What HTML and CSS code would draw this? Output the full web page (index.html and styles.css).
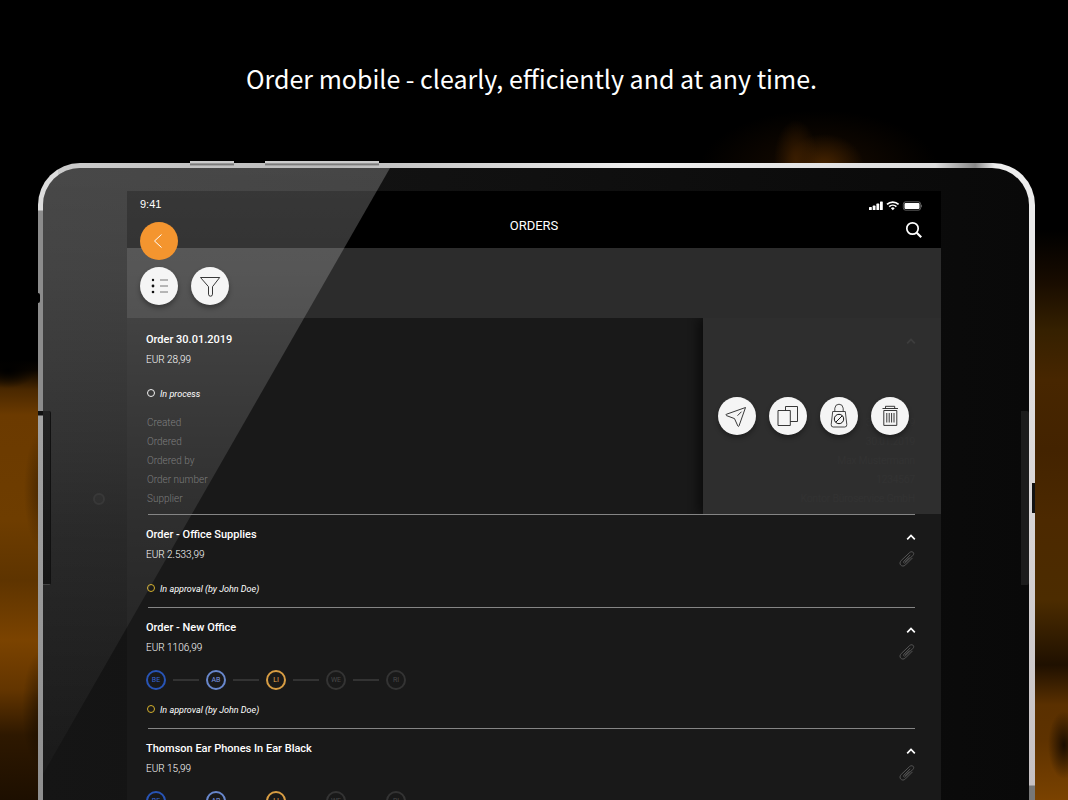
FILE: index.html
```html
<!DOCTYPE html>
<html lang="en">
<head>
<meta charset="utf-8">
<meta name="viewport" content="width=device-width, initial-scale=1">
<title>Orders</title>
<link rel="stylesheet" href="styles.css">
</head>
<body>
<svg class="defs" aria-hidden="true">
  <symbol id="chevron" viewBox="0 0 10 8"><path d="M1.2 6.3 5 2.4 8.800 6.300" fill="none" stroke="currentColor" stroke-width="1.700"/></symbol>
  <symbol id="clip" viewBox="0 0 18 18"><path d="M12.300 4.800 6 11.100c-1.300 1.300.3 2.900 1.600 1.600l7.300-7.300c2.400-2.400-.9-5-3.200-2.900L3.300 10.400c-3.600 3.600 1 7.700 4.200 4.500l7-7M6.800 12l4.600-4.600" fill="none" stroke="currentColor" stroke-width="1"/></symbol>
</svg>
<main class="stage">
  <div class="smoke smoke-top"></div>
  <div class="smoke smoke-left"></div>
  <div class="smoke smoke-right"></div>
  <h1 class="headline">Order mobile - clearly, efficiently and at any time.</h1>
  <div class="device">
    <span class="key key-short"></span>
    <span class="key key-long"></span>
    <span class="rail-dot"></span>
    <span class="rail-notch"></span>
    <div class="glass">
      <span class="slot slot-left"></span>
      <span class="slot slot-right"></span>
      <span class="camera"></span>
      <section class="screen">
        <header class="header">
          <div class="statusbar">
            <span class="clock">9:41</span>
            <svg class="signals" viewBox="0 0 54 10" aria-hidden="true">
              <g fill="#fff"><rect x="0" y="6" width="2.800" height="3" rx=".6"/><rect x="3.700" y="4.600" width="2.800" height="4.400" rx=".6"/><rect x="7.400" y="2.600" width="2.800" height="6.400" rx=".6"/><rect x="11" y=".5" width="2.800" height="8.500" rx=".6"/><rect x="35.500" y="2" width="15" height="6" rx="1"/><path d="M52.300 3.500c1 .6 1 2.400 0 3z" opacity=".5"/></g>
              <rect x="34.300" y=".8" width="17.400" height="8.400" rx="2.400" fill="none" stroke="#fff" stroke-opacity=".35"/>
              <g fill="none" stroke="#fff" stroke-width="1.700"><path d="M18 3.400a8.300 8.300 0 0 1 11.600 0"/><path d="M20.200 5.700a5.200 5.200 0 0 1 7.200 0"/></g>
              <path d="M21.900 7.200a2.800 2.800 0 0 1 3.800 0l-1.900 2z" fill="#fff"/>
            </svg>
          </div>
          <nav class="navbar">
            <button class="round back" aria-label="Back"><svg viewBox="0 0 38 38"><path d="m21.500 12.500-7 6.500 7 6.500" fill="none" stroke="#fff" stroke-width="1"/></svg></button>
            <h2 class="nav-title">ORDERS</h2>
            <button class="search" aria-label="Search"><svg viewBox="0 0 18 18"><circle cx="7.500" cy="7.500" r="5.700" fill="none" stroke="#fff" stroke-width="1.700"/><path d="m11.700 11.700 4.500 4.500" stroke="#fff" stroke-width="2.200"/></svg></button>
          </nav>
        </header>
        <div class="toolbar">
          <button class="round" aria-label="List"><svg viewBox="0 0 38 38"><path d="M20 13h8M20 19h8M20 25h8" stroke="#777" stroke-width="1"/><g fill="#111"><circle cx="13" cy="13" r="1.200"/><circle cx="13" cy="19" r="1.400"/><circle cx="13" cy="25" r="1.300"/></g></svg></button>
          <button class="round" aria-label="Filter"><svg viewBox="0 0 38 38"><path d="M9.500 10.500h19.200l-7.200 9.200v7.500q0 2-2 2t-2-2v-7.500z" fill="none" stroke="#222" stroke-width=".9" stroke-linejoin="round"/></svg></button>
        </div>
        <article class="order order-open">
          <div class="order-body">
            <h3 class="title">Order 30.01.2019</h3>
            <p class="price">EUR 28,99</p>
            <p class="status"><i class="dot dot-white"></i>In process</p>
            <dl class="details">
              <dt>Created</dt><dd>30.01.2019</dd>
              <dt>Ordered</dt><dd>30.01.2019</dd>
              <dt>Ordered by</dt><dd>Max Mustermann</dd>
              <dt>Order number</dt><dd>1234567</dd>
              <dt>Supplier</dt><dd>Kontor Büroservice GmbH</dd>
            </dl>
          </div>
          <div class="order-side"><button class="icon-button" aria-label="Collapse"><svg class="chevron"><use href="#chevron"/></svg></button></div>
          <div class="actions">
            <button class="round" aria-label="Send"><svg viewBox="0 0 38 38"><path d="M27.500 10.500 8.300 17.300q-1 .7.200 1.300l8 3 3.300 7.300q.7 1.200 1.200 0zM19.500 18.700l4-4" fill="none" stroke="#222" stroke-width=".9" stroke-linejoin="round"/></svg></button>
            <button class="round" aria-label="Copy"><svg viewBox="0 0 38 38"><path d="M9 13.500h12.300v15H9zM16.500 13.500v-4h12v15h-7.200" fill="none" stroke="#222" stroke-width=".9"/></svg></button>
            <button class="round" aria-label="Lock"><svg viewBox="0 0 38 38"><path d="M12.700 14.500h12.600l1.500 13q.2 2.500-2 2.500H13.200q-2.200 0-2-2.500zM14.800 14.500v-3.300q.5-4 4.200-4t4.200 4v3.300" fill="none" stroke="#333" stroke-width=".9"/><circle cx="19" cy="22" r="4.700" fill="none" stroke="#111" stroke-width="1"/><path d="m15.700 25.300 6.600-6.600" stroke="#111" stroke-width="1"/></svg></button>
            <button class="round" aria-label="Delete"><svg viewBox="0 0 38 38"><path d="M11.500 11.500h15.500M14.500 11.500V9.300h9.200v2.200M12.800 13.500h13v14.900h-13zM15.800 16v9.500M18.200 16v9.500M20.600 16v9.500M23 16v9.500" fill="none" stroke="#222" stroke-width=".9"/></svg></button>
          </div>
        </article>
        <article class="order">
          <div class="order-body">
            <h3 class="title">Order - Office Supplies</h3>
            <p class="price">EUR 2.533,99</p>
            <p class="status"><i class="dot"></i>In approval (by John Doe)</p>
          </div>
          <div class="order-side"><button class="icon-button" aria-label="Expand"><svg class="chevron"><use href="#chevron"/></svg></button><svg class="clip"><use href="#clip"/></svg></div>
        </article>
        <article class="order">
          <div class="order-body">
            <h3 class="title">Order - New Office</h3>
            <p class="price">EUR 1106,99</p>
            <ol class="steps"><li class="step blue">BE</li><li class="step sky">AB</li><li class="step amber">LI</li><li class="step">WE</li><li class="step">RI</li></ol>
            <p class="status after-steps"><i class="dot"></i>In approval (by John Doe)</p>
          </div>
          <div class="order-side"><button class="icon-button" aria-label="Expand"><svg class="chevron"><use href="#chevron"/></svg></button><svg class="clip"><use href="#clip"/></svg></div>
        </article>
        <article class="order">
          <div class="order-body">
            <h3 class="title">Thomson Ear Phones In Ear Black</h3>
            <p class="price">EUR 15,99</p>
            <ol class="steps"><li class="step blue">BE</li><li class="step sky">AB</li><li class="step amber">LI</li><li class="step">WE</li><li class="step">RI</li></ol>
          </div>
          <div class="order-side"><button class="icon-button" aria-label="Expand"><svg class="chevron"><use href="#chevron"/></svg></button><svg class="clip"><use href="#clip"/></svg></div>
        </article>
      </section>
      <div class="glare"></div>
    </div>
  </div>
</main>
</body>
</html>
```
FILE: styles.css
```css
* { box-sizing: border-box; }
body { margin: 0; background: #000; font-family: Roboto, "Liberation Sans", sans-serif; color: #fff; }
h1, h2, h3, p, dl, dd, ol { margin: 0; padding: 0; }
button { padding: 0; border: 0; background: none; color: inherit; cursor: pointer; }
svg { display: block; }
.defs { position: absolute; width: 0; height: 0; }

.stage { position: relative; display: flex; flex-direction: column; height: 100vh; overflow: hidden; padding: 58px 33px 0 38px; }
.headline { font: 400 25px/40px "Noto Sans CJK SC", "Noto Sans", sans-serif; text-align: center; padding-right: 10px; margin-bottom: 65px; }

.smoke { position: absolute; }
.smoke-top { top: 90px; left: 64%; width: 260px; height: 80px;
  background: radial-gradient(ellipse 22px 40px at 112px 70px, #3a1d00, transparent), radial-gradient(ellipse 40px 32px at 140px 76px, #482500, transparent), radial-gradient(ellipse 120px 60px at 135px 80px, #180b00, transparent); }
.smoke-left { top: 360px; bottom: 0; left: 0; width: 60px;
  background: radial-gradient(ellipse 28px 18px at 8px 10px, #000, transparent), radial-gradient(ellipse 18px 60px at 42px 130px, #2e180099, transparent), radial-gradient(ellipse 20px 60px at 42px 350px, #00000077, transparent), linear-gradient(#0000 0, #0a0500 10px, #4a2800 30px, #6b3a00 55px, #6e3d00 160px, #5e3400 220px, #7b4300 280px, #633500 330px, #2e1800 375px, #1d0f00 100%); }
.smoke-right { top: 230px; bottom: 0; right: 0; width: 60px;
  background: radial-gradient(ellipse 16px 34px at 56px 515px, #1a0d00, transparent), linear-gradient(#0000 0, #170b00 50px, #352000 100px, #472600 150px, #432300 220px, #4c2900 290px, #4c2c00 370px, #1f1000 435px, #5a3000 475px, #5e3200 510px, #7a4200 100%); }

.device { position: relative; flex: 1 0 auto; display: flex; padding: 5px 6px 0 5px; border-radius: 42px 42px 0 0;
  background: linear-gradient(#ddd 0 47px, #8c8c8c 48px 248px, #111 248px 252px, #a2a2a2 253px, #8e8e8e 100%) left / 20px 100% no-repeat, linear-gradient(90deg, #ccc, #bbb 30%, #eee 60%, #ddd 90%, #888 94%, #eee 96%) top / 100% 20px no-repeat, linear-gradient(#eee, #c6c1c3 622px, #777 623px); }
.key { position: absolute; top: -2px; height: 5px; background: linear-gradient(#ccc 2px, #666 3px, #bbb); }
.key-short { left: 152px; width: 44px; }
.key-long { left: 227px; width: 114px; }
.rail-dot { position: absolute; top: 130px; left: -2px; width: 4px; height: 10px; border-radius: 2px; background: #000; }
.rail-notch { position: absolute; top: 320px; right: 0; width: 3px; height: 30px; background: #111; }
.glass { position: relative; flex: 1; overflow: hidden; border-radius: 37px 37px 0 0; padding: 23px 88px 0 84px;
  background: linear-gradient(90deg, #151515, #101010 50%, #090909); }
.slot { position: absolute; top: 243px; height: 174px; width: 8px; z-index: 2; border-radius: 0 2px 2px 0; }
.slot-left { left: 0; background: linear-gradient(#222, #161616); border-right: 1px solid #111; border-bottom: 1px solid #444; }
.slot-right { right: 0; background: #1c1c1c; }
.camera { position: absolute; top: 325px; left: 50px; width: 12px; height: 12px; border-radius: 50%; background: #181818; border: 2px solid #222; }
.glare { position: absolute; z-index: 1; inset: 0 auto auto 0; width: 347px; height: 606px; pointer-events: none;
  background: linear-gradient(#ffffff38 0, #fff3 100px, #ffffff26 220px, #ffffff17 360px, #ffffff05 100%); clip-path: polygon(0 0, 100% 0, 0 100%); }

.screen { background: #191919; }
.header { background: #000; }
.statusbar { display: flex; justify-content: space-between; align-items: center; height: 26px; padding: 0 18px 0 13px; }
.clock { font: 400 11px/18px "Liberation Sans", sans-serif; }
.signals { width: 54px; height: 10px; margin-top: 3px; }
.navbar { position: relative; display: flex; justify-content: center; height: 31px; }
.nav-title { font-size: 13px; font-weight: 400; line-height: 18px; }
.round { display: block; position: relative; z-index: 2; width: 38px; height: 38px; border-radius: 50%; background: #f5f5f5; box-shadow: 0 3px 5px #0005; }
.round svg { width: 38px; height: 38px; }
.navbar .back { position: absolute; top: 5px; left: 13px; background: #f4952f; box-shadow: none; }
.search { position: absolute; top: 4px; right: 18px; }
.search svg { width: 18px; height: 18px; }
.toolbar { display: flex; gap: 13px; height: 70px; padding: 19px 13px 0; background: #2c2c2c; }

.order { position: relative; display: flex; justify-content: space-between; padding: 10px 25px 9px 19px; }
.order::after { content: ""; position: absolute; z-index: 2; left: 21px; right: 26px; bottom: -1px; height: 1px; background: #858585; }
.order + .order { margin-top: 1px; }
.order-body { flex: 1; }
.title { font-size: 11px; font-weight: 500; line-height: 20px; }
.price { font-size: 10px; font-weight: 300; line-height: 20px; }
.status { display: flex; align-items: center; gap: 5px; margin-top: 15px; padding-left: 1px; font-size: 9px; font-style: italic; line-height: 18px; }
.after-steps { margin-top: 11px; }
.dot { width: 8px; height: 8px; margin-bottom: 2px; border: 1px solid #d4b02c; border-radius: 50%; }
.dot-white { border-color: #eee; }
.order-side { display: flex; flex-direction: column; align-items: flex-end; padding-top: 8px; gap: 9px; }
.icon-button { display: block; }
.chevron { width: 10px; height: 8px; }
.clip { width: 18px; height: 18px; color: #555; }
.order-open { padding: 12px 26px 6px 19px; }
.order-open .order-side { position: absolute; top: 11px; right: 25px; }
.details { display: grid; grid-template-columns: auto auto; justify-content: space-between; margin-top: 10px; padding-left: 1px; font-size: 10px; font-weight: 300; line-height: 19px; color: #6c6c6c; }
.details dd { text-align: right; }
.actions { position: absolute; inset: 0 0 0 auto; display: flex; align-items: center; gap: 13px; width: 238px; padding-left: 15px; background: #303030f0; box-shadow: -5px 0 10px #0008; clip-path: inset(0 0 0 -16px); }

.steps { display: flex; gap: 40px; margin-top: 12px; list-style: none; }
.step { position: relative; width: 20px; height: 20px; border: 2px solid #333; border-radius: 50%; color: #484848; font-size: 7px; line-height: 16px; text-align: center; }
.step:not(:last-child)::after { content: ""; position: absolute; top: 7px; left: 25px; width: 26px; height: 2px; background: #333; }
.blue { border-color: #2854b5; color: #3566d6; }
.sky { border-color: #6887cc; color: #7b9be6; }
.amber { border-color: #d89d43; color: #e9aa4a; }
```
